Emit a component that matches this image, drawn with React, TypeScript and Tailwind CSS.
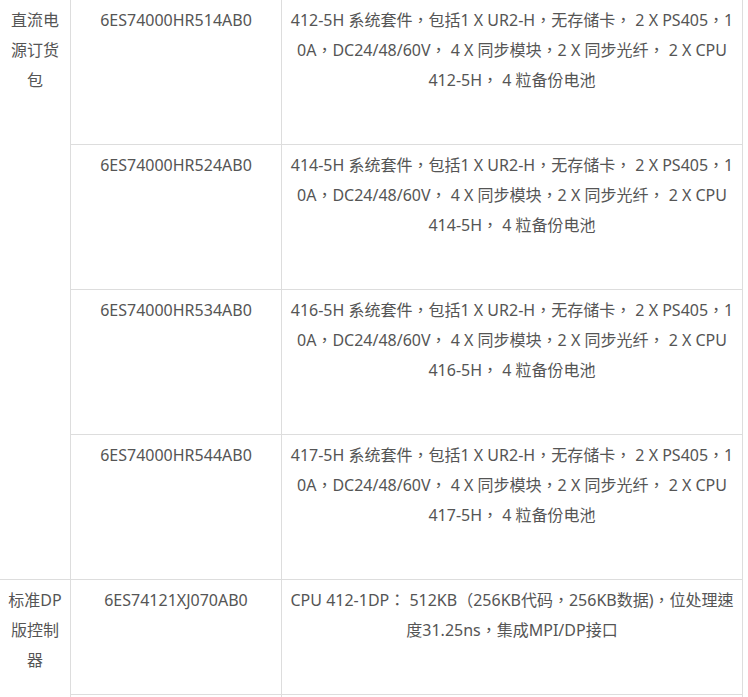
import React from "react";

interface Item {
    code: string;
    model: string;
}

const dcItems: Item[] = ["412", "414", "416", "417"].map((m, i) => ({
    code: `6ES74000HR5${i + 1}4AB0`,
    model: m,
}));

const cell = "border-r border-b border-[#dddddd] px-[5px] pt-[5px] text-center break-all";

export default function App() {
    return (
        <div
            className="w-[748px] h-[697px] overflow-hidden bg-white text-[#555555] text-[16px] leading-[30px]"
            style={{ fontFamily: '"Noto Sans", "Noto Sans CJK TC", sans-serif' }}
        >
            <div className="grid w-[743px] grid-cols-[71px_211px_461px] grid-rows-[145px_145px_145px_145px_115px_60px]">
                {/* 直流电源订货包 */}
                <div className={`${cell} row-span-4 col-start-1 row-start-1`}>直流电源订货包</div>
                {dcItems.map((item, i) => (
                    <React.Fragment key={item.code}>
                        <div className={cell} style={{ gridColumn: 2, gridRow: i + 1 }}>
                            {item.code}
                        </div>
                        <div className={cell} style={{ gridColumn: 3, gridRow: i + 1 }}>
                            {item.model}-5H 系统套件，包括1 X UR2-H，无存储卡， 2 X PS405，10A，DC24/48/60V， 4 X
                            同步模块，2 X 同步光纤， 2 X CPU{" "}
                            <span className="whitespace-nowrap">{item.model}-5H，</span> 4 粒备份电池
                        </div>
                    </React.Fragment>
                ))}

                {/* 标准DP版控制器 */}
                <div className={`${cell} row-span-2 col-start-1 row-start-5`}>标准DP版控制器</div>
                <div className={`${cell} col-start-2 row-start-5`}>6ES74121XJ070AB0</div>
                <div className={`${cell} col-start-3 row-start-5`}>
                    CPU 412-1DP： 512KB（256KB代码，256KB数据)，位处理速度31.25ns，集成MPI/DP接口
                </div>
                <div className={`${cell} col-start-2 row-start-6`} />
                <div className={`${cell} col-start-3 row-start-6`} />
            </div>
        </div>
    );
}
